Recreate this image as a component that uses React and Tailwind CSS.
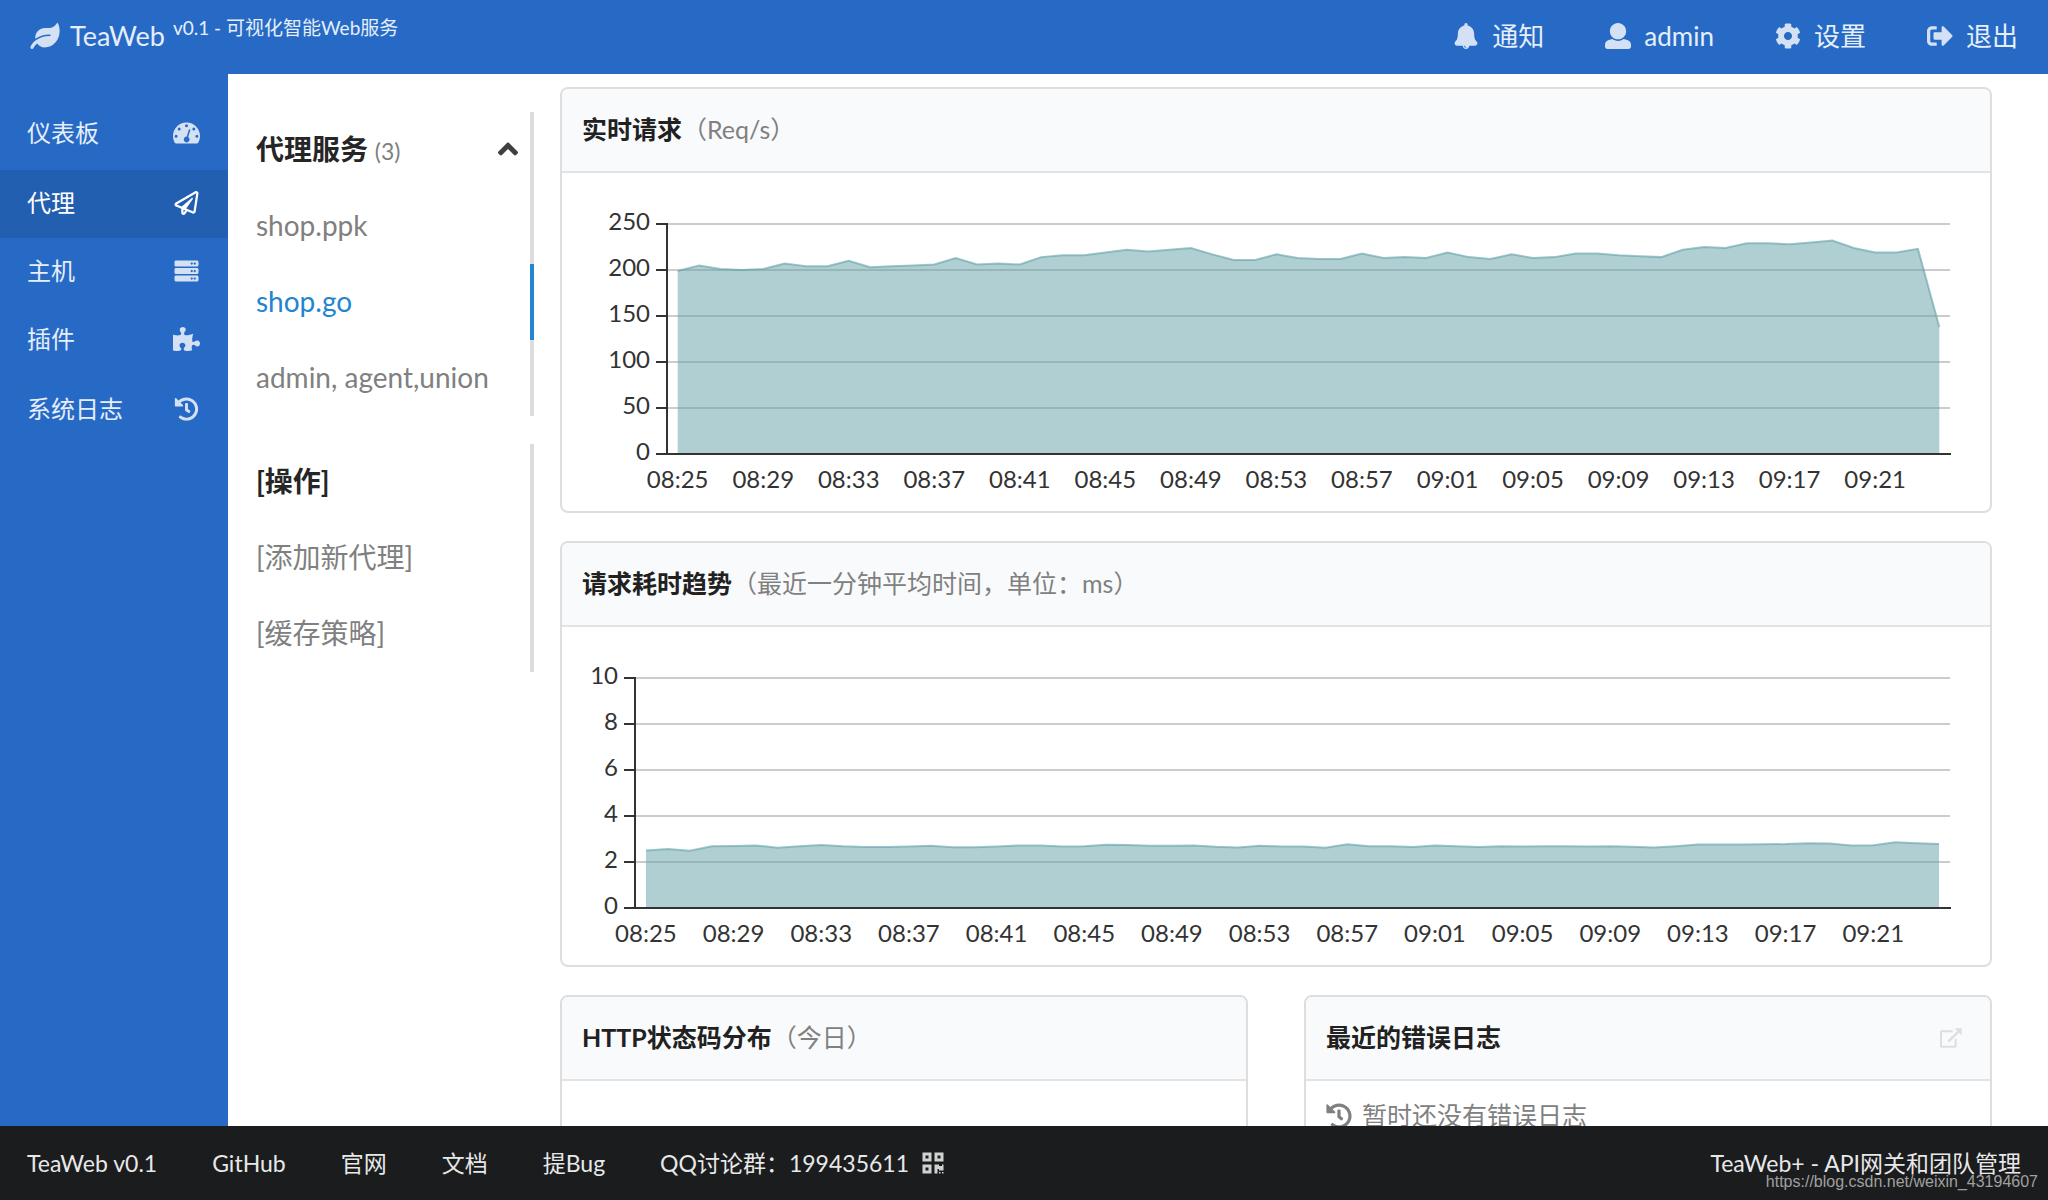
import React, { useLayoutEffect, useRef, useState } from 'react';
import {
  FaAngleUp,
  FaCog,
  FaHistory,
  FaLeaf,
  FaPuzzlePiece,
  FaQrcode,
  FaRegPaperPlane,
  FaServer,
  FaSignOutAlt,
} from 'react-icons/fa';

const requests = [
  199, 205, 201, 200, 201, 207, 204, 204, 210, 203, 204, 205, 206, 213, 206,
  207, 206, 214, 216, 216, 219, 222, 220, 222, 224, 217, 211, 211, 217, 213,
  212, 212, 218, 213, 214, 213, 219, 214, 212, 217, 213, 214, 218, 218, 216,
  215, 214, 222, 225, 224, 229, 229, 228, 230, 232, 224, 219, 219, 223, 138,
];

const costs = [
  2.5, 2.56, 2.49, 2.68, 2.7, 2.72, 2.62, 2.69, 2.74, 2.68, 2.65, 2.65, 2.67, 2.71, 2.64,
  2.64, 2.67, 2.72, 2.72, 2.67, 2.69, 2.75, 2.74, 2.71, 2.71, 2.72, 2.66, 2.63, 2.71, 2.67,
  2.67, 2.62, 2.77, 2.68, 2.69, 2.65, 2.72, 2.69, 2.65, 2.69, 2.67, 2.68, 2.68, 2.67, 2.68,
  2.66, 2.63, 2.69, 2.76, 2.76, 2.76, 2.77, 2.78, 2.82, 2.8, 2.72, 2.73, 2.86, 2.81, 2.78,
];

const timeLabel = (index) => {
  const minutes = 8 * 60 + 25 + index;
  const pad = (n) => String(n).padStart(2, '0');
  return `${pad(Math.floor(minutes / 60))}:${pad(minutes % 60)}`;
};

function BellIcon({ className }) {
  return (
    <svg viewBox="0 0 448 512" fill="currentColor" className={className} aria-hidden="true">
      <path d="M433.884 366.059C411.634 343.809 384 316.118 384 208c0-79.394-57.831-145.269-133.663-157.830A31.845 31.845 0 0 0 256 32c0-17.673-14.327-32-32-32s-32 14.327-32 32c0 6.750 2.095 13.008 5.663 18.170C121.831 62.731 64 128.606 64 208c0 108.118-27.643 135.809-49.893 158.059C-16.042 396.208 5.325 448 48.048 448H160c0 35.346 28.654 64 64 64s64-28.654 64-64h111.943c42.638 0 64.151-51.731 33.941-81.941zM224 472a8 8 0 0 1 0 16c-22.056 0-40-17.944-40-40h16c0 13.234 10.766 24 24 24z" />
    </svg>
  );
}

function UserIcon({ className }) {
  return (
    <svg viewBox="0 0 512 512" fill="currentColor" className={className} aria-hidden="true">
      <path d="M256 0c88.366 0 160 71.634 160 160s-71.634 160-160 160S96 248.366 96 160 167.634 0 256 0zm183.283 333.821l-71.313-17.828c-74.923 53.890-165.738 41.864-223.940 0l-71.313 17.828C29.981 344.505 0 382.903 0 426.955V464c0 26.510 21.490 48 48 48h416c26.510 0 48-21.490 48-48v-37.045c0-44.052-29.981-82.450-72.717-93.134z" />
    </svg>
  );
}

// holes are cut with even-odd so the gauge works on any background
function GaugeIcon({ className }) {
  return (
    <svg viewBox="0 0 576 512" fill="currentColor" fillRule="evenodd" className={className} aria-hidden="true">
      <path d="M288 32C129 32 0 161 0 320c0 53 14 102 39 145 6 10 16 15 27 15h444c11 0 21-5 27-15 25-43 39-92 39-145C576 161 447 32 288 32z
        M256 100a32 32 0 1 0 64 0a32 32 0 1 0-64 0z
        M100 168a32 32 0 1 0 64 0a32 32 0 1 0-64 0z
        M412 168a32 32 0 1 0 64 0a32 32 0 1 0-64 0z
        M34 324a32 32 0 1 0 64 0a32 32 0 1 0-64 0z
        M478 324a32 32 0 1 0 64 0a32 32 0 1 0-64 0z
        M338 186a16 16 0 0 1 31 9L325 343a62 62 0 1 1-31-10z" />
    </svg>
  );
}

function ExternalIcon({ className }) {
  return (
    <svg viewBox="0 0 66 60" fill="none" stroke="currentColor" strokeWidth="6" className={className} aria-hidden="true">
      <path d="M38 10H6a3 3 0 0 0-3 3v40a3 3 0 0 0 3 3h38a3 3 0 0 0 3-3V32" />
      <path d="M25 41L56 10" strokeWidth="7" />
      <path d="M44 1H65V22z" fill="currentColor" stroke="none" />
    </svg>
  );
}

function AreaChart({ label, data, ticks, axisLeft }) {
  const ref = useRef(null);
  const [width, setWidth] = useState(0);

  useLayoutEffect(() => {
    const update = () => setWidth(ref.current.clientWidth);
    update();
    const observer = new ResizeObserver(update);
    observer.observe(ref.current);
    return () => observer.disconnect();
  }, []);

  const top = 51;
  const bottom = 281;
  const right = width - 40;
  const max = ticks[ticks.length - 1];
  const step = (right - axisLeft) / data.length;
  const x = (i) => axisLeft + step * (i + 0.5);
  const y = (v) => bottom - (v / max) * (bottom - top);
  const line = data.map((v, i) => `${x(i)},${y(v)}`).join(' ');

  return (
    <div ref={ref} className="h-[338px] w-full">
      {width > 0 && (
        <svg width={width} height="338" role="img" aria-label={label} className="block text-2xl">
          {ticks.map(t => (
            <g key={t}>
              {t > 0 && <line x1={axisLeft} x2={right} y1={y(t)} y2={y(t)} stroke="#ccc" strokeWidth="2" />}
              <line x1={axisLeft - 11} x2={axisLeft} y1={y(t)} y2={y(t)} stroke="#333" strokeWidth="2" />
              <text x={axisLeft - 17} y={y(t) + 6} textAnchor="end" fill="#333">{t}</text>
            </g>
          ))}
          <polygon
            points={`${x(0)},${bottom} ${line} ${x(data.length - 1)},${bottom}`}
            fill="#61a0a8"
            fillOpacity="0.5"
          />
          <polyline points={line} fill="none" stroke="#61a0a8" strokeOpacity="0.6" strokeWidth="2" />
          <line x1={axisLeft} x2={axisLeft} y1={top - 1} y2={bottom + 1} stroke="#333" strokeWidth="2" />
          <line x1={axisLeft} x2={right + 1} y1={bottom} y2={bottom} stroke="#333" strokeWidth="2" />
          {data.map((v, i) => i % 4 === 0 && i < data.length - 2 && (
            <text key={i} x={x(i)} y={bottom + 34} textAnchor="middle" fill="#333">{timeLabel(i)}</text>
          ))}
        </svg>
      )}
    </div>
  );
}

function Card({ title, note, action, children }) {
  return (
    <section className="rounded-lg border-2 border-[#dededf] bg-white">
      <header className="flex h-[84px] items-center justify-between rounded-t-md border-b-2 border-[#e1e3e4] bg-[#f9fafb] pr-7 pl-5">
        <h2 className="text-[25px] font-bold text-[#212121]">
          {title}
          {note && <span className="font-normal text-[#808080]">{note}</span>}
        </h2>
        {action}
      </header>
      {children}
    </section>
  );
}

const topLinks = [
  { name: '通知', icon: BellIcon },
  { name: 'admin', icon: UserIcon },
  { name: '设置', icon: FaCog },
  { name: '退出', icon: FaSignOutAlt },
];

function TopBar() {
  return (
    <header className="flex h-[74px] shrink-0 items-center justify-between bg-[#276ac6] px-[30px] pb-0.5 text-[26px] text-[#e6eefa]">
      <a href="#" className="flex items-center">
        <FaLeaf className="mr-2.5 h-[26px] w-[30px] text-[#d4e1f4]" />
        <span className="text-[27px]">TeaWeb</span>
        <span className="mb-4 ml-2 text-[19px]">v0.1 - 可视化智能Web服务</span>
      </a>
      <nav className="flex gap-[61px]">
        {topLinks.map(({ name, icon: Icon }) => (
          <a key={name} href="#" className="flex items-center gap-[13px]">
            <Icon className="size-[26px] text-[#d4e1f4]" />
            {name}
          </a>
        ))}
      </nav>
    </header>
  );
}

const menuGroups = [
  [{ name: '仪表板', icon: GaugeIcon }],
  [
    { name: '代理', icon: FaRegPaperPlane, active: true },
    { name: '主机', icon: FaServer },
    { name: '插件', icon: FaPuzzlePiece },
  ],
  [{ name: '系统日志', icon: FaHistory }],
];

function Sidebar() {
  return (
    <nav className="flex w-[228px] shrink-0 flex-col gap-0.5 bg-[#276ac6] pt-[26px] text-2xl">
      {menuGroups.map((group, index) => (
        <ul key={index}>
          {group.map(({ name, icon: Icon, active }) => (
            <li key={name}>
              <a
                href="#"
                className={`flex h-[68px] items-center justify-between pr-7 pb-0.5 pl-[27px] ${active ? 'bg-[#235fb1] text-white' : 'text-[#e6eefa]'}`}
              >
                {name}
                <Icon className={`h-6 w-[27px] ${active ? 'text-white' : 'text-[#d4e1f4]'}`} />
              </a>
            </li>
          ))}
        </ul>
      ))}
    </nav>
  );
}

const itemStyle = 'flex h-[76px] w-full items-center border-r-4 pr-3 pb-0.5';

function SubMenu() {
  return (
    <aside className="flex w-[278px] shrink-0 flex-col gap-7 pt-[38px] text-[28px] text-[#808080]">
      <div>
        <button type="button" className={`${itemStyle} justify-between border-[#dcdcdc]`}>
          <span className="font-bold text-[#262626]">
            代理服务 <span className="text-[23px] font-normal text-[#808080]">(3)</span>
          </span>
          <FaAngleUp className="h-8 w-5 text-[#404040]" />
        </button>
        <a href="#" className={`${itemStyle} border-[#dcdcdc]`}>shop.ppk</a>
        <a href="#" className={`${itemStyle} border-[#2185d0] text-[#2185d0]`}>shop.go</a>
        <a href="#" className={`${itemStyle} border-[#dcdcdc]`}>admin, agent,union</a>
      </div>
      <div>
        <h2 className={`${itemStyle} border-[#dcdcdc] font-bold text-[#262626]`}>[操作]</h2>
        <a href="#" className={`${itemStyle} border-[#dcdcdc]`}>[添加新代理]</a>
        <a href="#" className={`${itemStyle} border-[#dcdcdc]`}>[缓存策略]</a>
      </div>
    </aside>
  );
}

function Footer() {
  return (
    <footer className="relative flex h-[74px] shrink-0 items-center justify-between bg-[#1b1c1d] px-[27px] text-[23px] text-[#e8e8e8]">
      <nav className="flex gap-[55px]">
        <a href="#">TeaWeb v0.1</a>
        <a href="#">GitHub</a>
        <a href="#">官网</a>
        <a href="#">文档</a>
        <a href="#">提Bug</a>
        <a href="#" className="flex items-center gap-3">
          QQ讨论群：199435611
          <FaQrcode className="size-6 text-[#d1d1d2]" />
        </a>
      </nav>
      <a href="#">TeaWeb+ - API网关和团队管理</a>
      <span className="absolute right-2.5 bottom-1.5 font-['Liberation_Sans',sans-serif] text-base text-[#a0a0a0]">
        https://blog.csdn.net/weixin_43194607
      </span>
    </footer>
  );
}

export default function App() {
  return (
    <div className="flex h-screen flex-col overflow-hidden bg-white font-['Lato','Noto_Sans_CJK_SC',sans-serif]">
      <TopBar />
      <div className="flex min-h-0 flex-1">
        <Sidebar />
        <div className="flex min-w-0 flex-1 pl-7">
          <SubMenu />
          <main className="flex min-w-0 flex-1 flex-col gap-7 overflow-hidden pt-[13px] pr-14 pl-[26px]">
            <Card title="实时请求" note="（Req/s）">
              <AreaChart label="实时请求" data={requests} ticks={[0, 50, 100, 150, 200, 250]} axisLeft={105} />
            </Card>
            <Card title="请求耗时趋势" note="（最近一分钟平均时间，单位：ms）">
              <AreaChart label="请求耗时趋势" data={costs} ticks={[0, 2, 4, 6, 8, 10]} axisLeft={73} />
            </Card>
            <div className="grid grid-cols-2 gap-14">
              <Card title="HTTP状态码分布" note="（今日）">
                <div className="h-[338px]" />
              </Card>
              <Card
                title="最近的错误日志"
                action={
                  <a href="#" aria-label="查看全部">
                    <ExternalIcon className="h-5 w-[22px] text-[#dedede]" />
                  </a>
                }
              >
                <p className="flex items-center gap-2.5 px-5 pt-4 text-[25px] text-[#808080]">
                  <FaHistory className="size-[26px]" />
                  暂时还没有错误日志
                </p>
              </Card>
            </div>
          </main>
        </div>
      </div>
      <Footer />
    </div>
  );
}
